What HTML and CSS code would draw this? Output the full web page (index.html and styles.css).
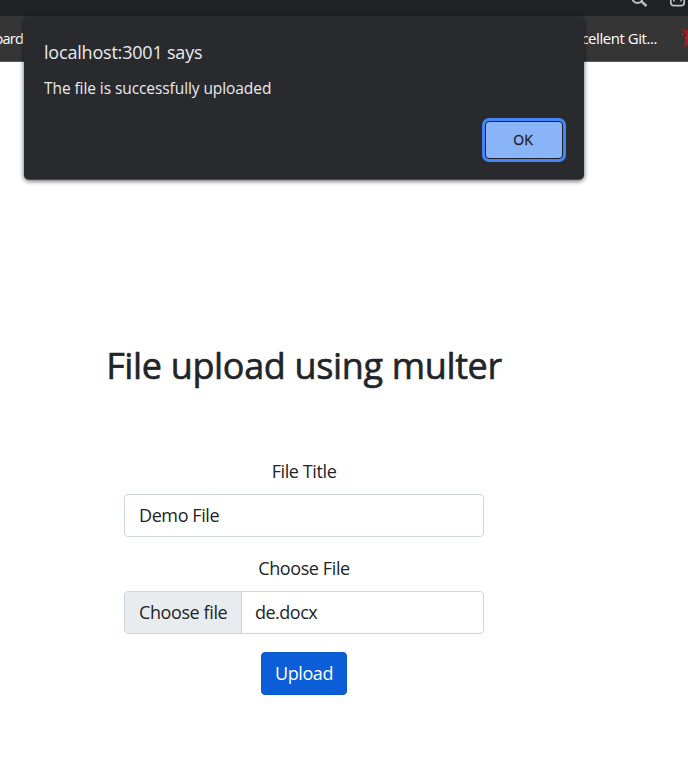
FILE: index.html
```html
<!DOCTYPE html>
<html lang="en">
<head>
<meta charset="utf-8">
<title>File upload</title>
<link rel="stylesheet" href="styles.css">
</head>
<body>
<header class="browser">
  <div class="toolbar">
    <svg class="tool-icons" width="60" height="16" viewBox="628 0 60 16" fill="none" stroke="#bdc1c6">
      <circle cx="637.5" cy="-2" r="5" stroke-width="2"/>
      <path d="M641 1.200L646.500 6" stroke-width="2.400"/>
      <path d="M670.800 0V2.500Q670.800 5.700 674 5.700H681Q684.200 5.700 684.200 2.500V0" stroke-width="1.700"/>
      <path d="M674 0V1.500M681 0V1.500" stroke-width="1.500"/>
    </svg>
  </div>
  <div class="bookmarks">
    <span class="bookmark bookmark-left">oard</span>
    <span class="bookmark bookmark-right">Excellent Git...</span>
    <svg class="bookmark-icon" width="8" height="22" viewBox="680 28 8 22" fill="none" stroke="#c4121f" stroke-width="1.500">
      <path d="M683 30.500L685 33M681.300 34.500L684 36M687.500 31L686 34L688 36M688 35L685.500 39L686 42L684.500 47.500M686 42L688 42M687.500 37V46"/>
    </svg>
  </div>
</header>
<main class="page">
  <h1 class="heading"><span>File upload using multer</span></h1>
  <form class="upload-form">
    <label class="label label-title">File Title</label>
    <div class="control"><span class="value demo">Demo File</span></div>
    <label class="label label-file">Choose File</label>
    <div class="control file-control">
      <span class="picker">Choose file</span>
      <span class="filename">de.docx</span>
    </div>
    <button class="submit" type="button">Upload</button>
  </form>
</main>
<section class="dialog">
  <h2 class="dialog-title">localhost:3001 says</h2>
  <p class="dialog-text">The file is successfully uploaded</p>
  <button class="ok" type="button">OK</button>
</section>
</body>
</html>
```
FILE: styles.css
```css
* { box-sizing: border-box; }
body {
  margin: 0;
  height: 779px;
  overflow: hidden;
  position: relative;
  background: #fff;
  color: #212529;
  font-family: "Open Sans", "Noto Sans", sans-serif;
  font-size: 18px;
}
h1, h2, p { margin: 0; }
button { font: inherit; padding: 0; }
.toolbar {
  height: 16px;
  background: #202124;
  display: flex;
  justify-content: flex-end;
}
.tool-icons { display: block; }
.bookmarks {
  height: 46px;
  padding-bottom: 1px;
  background: #353535;
  border-bottom: 1px solid #5a5a5a;
  display: flex;
  align-items: center;
  overflow: hidden;
  color: #fff;
  font-size: 15px;
  letter-spacing: -0.45px;
  white-space: nowrap;
}
.bookmark-left {
  width: 23px;
  display: flex;
  justify-content: flex-end;
  font-size: 14.500px;
  letter-spacing: -0.8px;
}
.bookmark-right { margin-left: auto; }
.bookmark-icon { margin-left: 23px; flex: none; }
.page {
  width: 608px;
  display: flex;
  flex-direction: column;
  align-items: center;
}
.heading {
  margin-top: 277px;
  height: 54px;
  line-height: 54px;
  font-size: 36px;
  font-weight: 400;
  letter-spacing: -0.35px;
  -webkit-text-stroke: 0.6px #212529;
  white-space: nowrap;
}
.upload-form {
  width: 360px;
  margin-top: 65px;
  display: flex;
  flex-direction: column;
  align-items: center;
}
.label { line-height: 27px; margin-bottom: 9px; letter-spacing: -0.4px; }
.control {
  width: 360px;
  height: 43px;
  border: 1px solid #ced4da;
  border-radius: 4px;
  margin-bottom: 18px;
  display: flex;
  align-items: center;
  overflow: hidden;
  letter-spacing: -0.4px;
}
.value { padding: 0 0 2px 14px; }
.picker {
  width: 117px;
  height: 100%;
  padding-left: 14px;
  line-height: 41px;
  background: #e9ecef;
  border-right: 1px solid #ced4da;
  white-space: nowrap;
}
.filename { padding: 0 0 2px 13px; letter-spacing: -0.5px; }
.submit {
  width: 86px;
  height: 43px;
  padding-bottom: 2px;
  border: 1px solid #0a58ca;
  border-radius: 4px;
  background: #0b5ed7;
  color: #fff;
  letter-spacing: -0.4px;
}
.dialog {
  position: absolute;
  left: 24px;
  top: 17px;
  width: 560px;
  height: 163px;
  padding: 20px;
  display: flex;
  flex-direction: column;
  background: #292a2d;
  border-radius: 5px;
  border-bottom: 1px solid #4b4b4d;
  box-shadow: 0 1px 5px rgba(0, 0, 0, .65);
  color: #e8eaed;
}
.dialog-title { font-size: 18px; font-weight: 400; line-height: 30px; letter-spacing: -0.2px; }
.dialog-text { margin-top: 9px; font-size: 15.500px; line-height: 24px; letter-spacing: -0.08px; }
.ok {
  align-self: flex-end;
  width: 78px;
  height: 38px;
  margin: 21px 1px 0 0;
  padding: 0 2px 2px 0;
  border: 1px solid #202124;
  border-radius: 4px;
  background: #8ab4f8;
  box-shadow: 0 0 0 3px #4285f4;
  color: #202124;
  font-size: 14px;
  -webkit-text-stroke: 0.3px #202124;
}
```
